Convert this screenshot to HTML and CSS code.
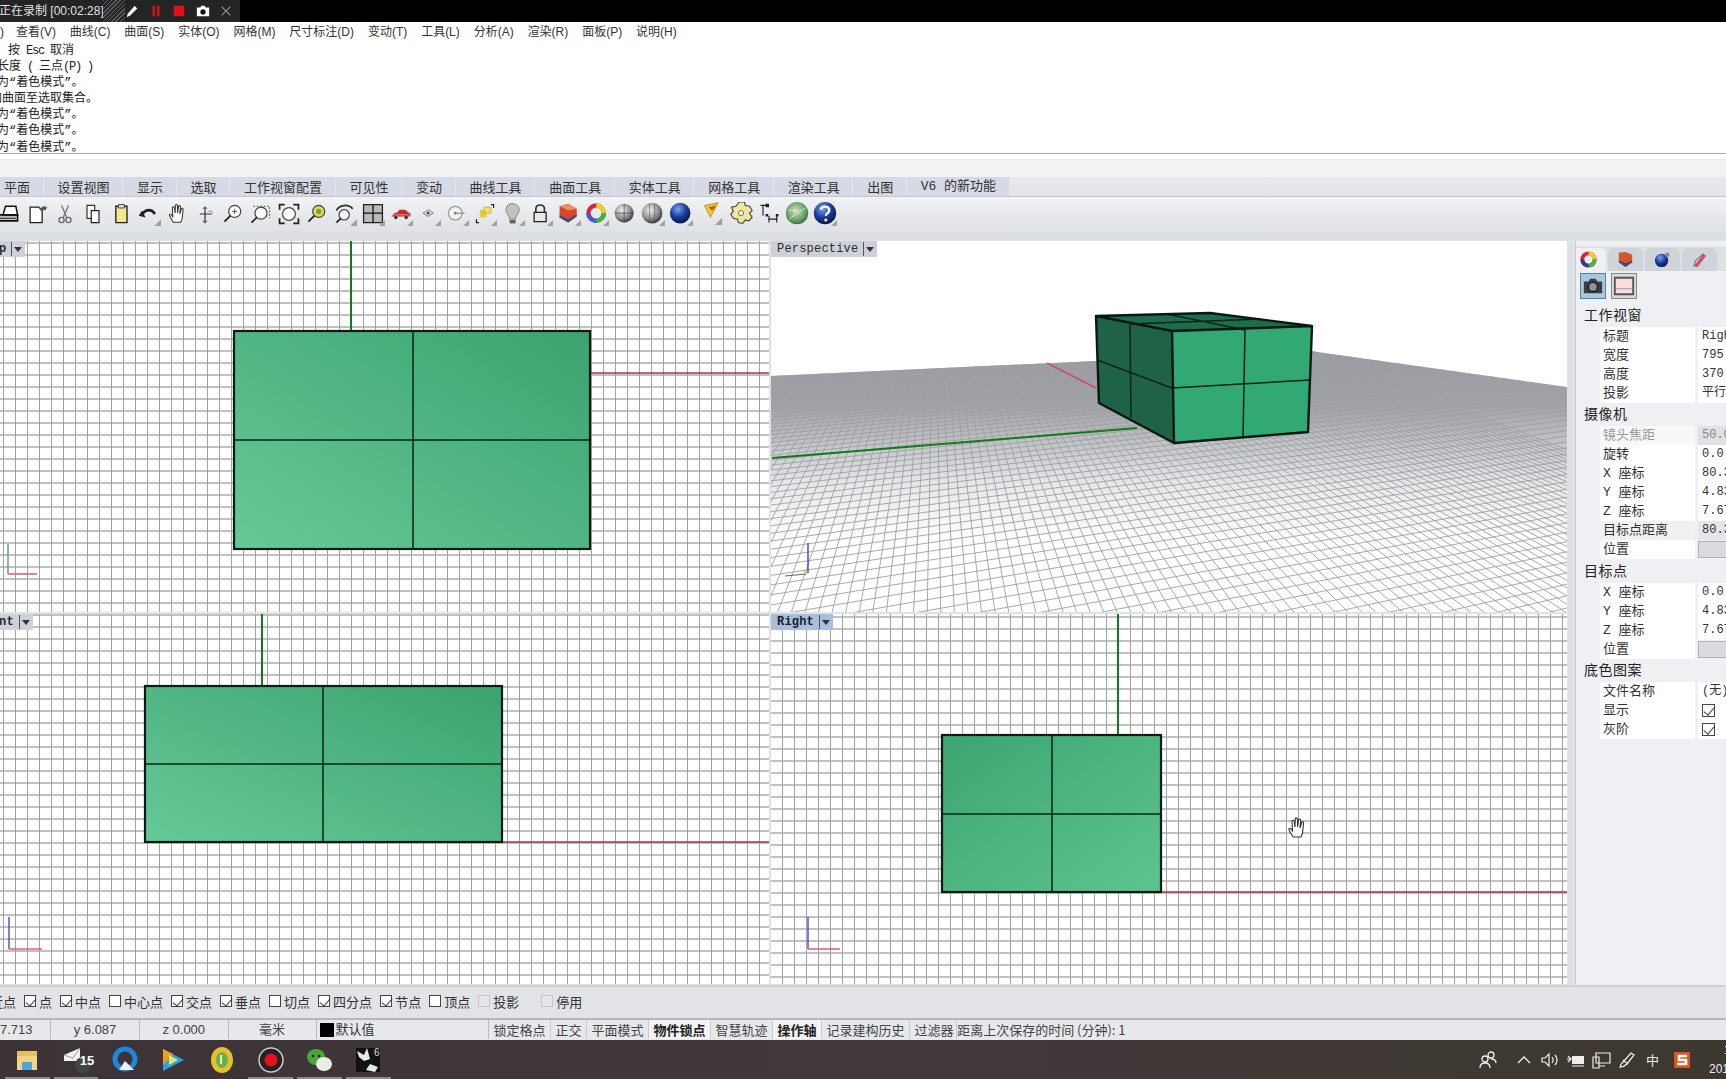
FILE: index.html
```html
<!DOCTYPE html>
<html lang="zh">
<head>
<meta charset="utf-8">
<title>Rhino 6</title>
<link rel="stylesheet" href="styles.css">
</head>
<body>
<svg class="defs" aria-hidden="true">
  <defs>
    <linearGradient id="faceA" x1="0" y1="1" x2="1" y2="0"><stop offset="0" stop-color="#66c998"/><stop offset="1" stop-color="#3ba270"/></linearGradient>
    <linearGradient id="faceB" x1="0" y1="0" x2="1" y2="1"><stop offset="0" stop-color="#3ca571"/><stop offset="1" stop-color="#5ec48f"/></linearGradient>
    <linearGradient id="floorFade" x1="0" y1="350" x2="0" y2="540" gradientUnits="userSpaceOnUse"><stop offset="0" stop-color="#999ba1"/><stop offset=".3" stop-color="#a2a4a9"/><stop offset=".7" stop-color="#e6e7e9"/><stop offset="1" stop-color="#ffffff"/></linearGradient>
    <radialGradient id="sphereGray" cx=".4" cy=".35" r=".7"><stop offset="0" stop-color="#f4f4f4"/><stop offset=".6" stop-color="#8f8f8f"/><stop offset="1" stop-color="#2c2c2c"/></radialGradient>
    <radialGradient id="sphereBlue" cx=".4" cy=".3" r=".7"><stop offset="0" stop-color="#7da4ea"/><stop offset=".55" stop-color="#1b3fa0"/><stop offset="1" stop-color="#0a1746"/></radialGradient>
    <radialGradient id="sphereGreen" cx=".45" cy=".4" r=".65"><stop offset="0" stop-color="#d0e4c0"/><stop offset=".7" stop-color="#5f9a62"/><stop offset="1" stop-color="#2e5a38"/></radialGradient>
    <symbol id="hand" viewBox="0 0 24 24"><path d="M8 21 4 14c-.8-1.4.9-2.4 1.9-1.2L7.500 15 7 5.500c0-1.600 2-1.600 2.200 0L10 11l.2-8c.1-1.500 2.100-1.500 2.200 0l.2 8 1-7c.2-1.500 2.200-1.300 2.100.2l-.7 7.800 1.700-5.500c.5-1.300 2.200-.8 1.900.6L17.500 17 16 21z" fill="#fff" stroke="#333" stroke-width="1.100"/></symbol>
    <symbol id="flyout" viewBox="0 0 8 8"><path d="M8 0V8H0z" fill="#9aa0a8"/></symbol>
  </defs>
</svg>

<header class="recbar">
  <div class="rec-pill">
    <span class="rec-time">正在录制 [00:02:28]</span>
    <span class="rec-hatch"></span>
    <svg class="rec-icon" viewBox="0 0 16 16"><path d="M2 15l1-4 8-9 3 3-8 8z" fill="#f4f4f4"/></svg>
    <svg class="rec-icon" viewBox="0 0 16 16"><path d="M4 2h3v12H4zM9 2h3v12H9z" fill="#c8141c"/></svg>
    <svg class="rec-icon" viewBox="0 0 16 16"><path d="M2 2h12v12H2z" fill="#e0101a"/></svg>
    <svg class="rec-icon" viewBox="0 0 16 16"><path d="M1 4h4l1-2h4l1 2h4v10H1z" fill="#fff"/><circle cx="8" cy="9" r="3" fill="#111"/></svg>
    <svg class="rec-icon" viewBox="0 0 16 16"><path d="M3 3l10 10M13 3 3 13" stroke="#9a9a9a" stroke-width="1.200"/></svg>
  </div>
</header>

<nav class="menubar">
  <span class="menu-cut">)</span><span>查看(V)</span><span>曲线(C)</span><span>曲面(S)</span><span>实体(O)</span><span>网格(M)</span><span>尺寸标注(D)</span><span>变动(T)</span><span>工具(L)</span><span>分析(A)</span><span>渲染(R)</span><span>面板(P)</span><span>说明(H)</span>
</nav>

<section class="history">
  <div class="hist-first">按<span class="asc"> Esc </span>取消</div>
  <div>长度<span class="asc"> ( </span>三点<span class="asc">(P) )</span></div>
  <div>为“着色模式”。</div>
  <div class="hist-long">加曲面至选取集合。</div>
  <div>为“着色模式”。</div>
  <div>为“着色模式”。</div>
  <div>为“着色模式”。</div>
</section>
<div class="cmdline"></div>

<div class="tabs">
  <span class="tab tab-first">平面</span><span class="tab">设置视图</span><span class="tab">显示</span><span class="tab">选取</span><span class="tab">工作视窗配置</span><span class="tab">可见性</span><span class="tab">变动</span><span class="tab">曲线工具</span><span class="tab">曲面工具</span><span class="tab">实体工具</span><span class="tab">网格工具</span><span class="tab">渲染工具</span><span class="tab">出图</span><span class="tab tab-mono">V6 的新功能</span>
</div>

<div class="toolbar">
  <svg class="tool" viewBox="0 0 28 28"><path d="M2 15h22v7H2z" fill="#b9bcc0" stroke="#111" stroke-width="1.800"/><path d="M7 15 10 5h12l2 10z" fill="#fff" stroke="#111" stroke-width="1.800"/><path d="M2 19h20" stroke="#111"/></svg>
  <svg class="tool" viewBox="0 0 28 28"><path d="M6 6h10l4 4v14H6z" fill="#fff" stroke="#222" stroke-width="1.500"/><path d="M17 8l6-4v2l3-1-2 5-2-1-3 2z" fill="#555"/></svg>
  <svg class="tool" viewBox="0 0 28 28"><path d="M10 4l6 14M18 4l-6 14" stroke="#777" stroke-width="1.600"/><circle cx="10" cy="21" r="3" fill="none" stroke="#666" stroke-width="1.500"/><circle cx="18" cy="21" r="3" fill="none" stroke="#666" stroke-width="1.500"/></svg>
  <svg class="tool" viewBox="0 0 28 28"><path d="M7 4h9l0 15H7z" fill="#fff" stroke="#333" stroke-width="1.400"/><path d="M12 10h9v14h-9z" fill="#fff" stroke="#222" stroke-width="1.400"/></svg>
  <svg class="tool" viewBox="0 0 28 28"><path d="M8 5h13v19H8z" fill="#f3e98c" stroke="#222" stroke-width="1.600"/><path d="M11 3h7v4h-7z" fill="#ddd" stroke="#333"/></svg>
  <svg class="tool" viewBox="0 0 28 28"><path d="M6 14c5-6 11-6 15 0" fill="none" stroke="#222" stroke-width="3"/><path d="M2 16l8 2-4-8z" fill="#222"/><use href="#flyout" x="20" y="20" width="8" height="8"/></svg>
  <svg class="tool" viewBox="0 0 28 28"><use href="#hand" x="1" y="1" width="26" height="26"/></svg>
  <svg class="tool" viewBox="0 0 28 28"><path d="M14 8v14M8 14h14" stroke="#333" stroke-width="1.400"/><path d="M11 8h6l-3-3zM11 22h6l-3 3z" fill="#555"/><path d="M18 11c3-1 5 0 5 2" fill="none" stroke="#777"/></svg>
  <svg class="tool" viewBox="0 0 28 28"><circle cx="16" cy="11" r="7" fill="#fff" stroke="#444" stroke-width="1.400"/><path d="M11 16 4 23" stroke="#222" stroke-width="2"/><path d="M13 11h6M16 8v6" stroke="#444"/></svg>
  <svg class="tool" viewBox="0 0 28 28"><circle cx="14" cy="13" r="7" fill="#fff" stroke="#444" stroke-width="1.400"/><path d="M9 18 3 24" stroke="#222" stroke-width="2"/><path d="M5 5h19v14" fill="none" stroke="#333" stroke-dasharray="2 2"/></svg>
  <svg class="tool" viewBox="0 0 28 28"><circle cx="14" cy="14" r="7.500" fill="#fff" stroke="#444" stroke-width="1.400"/><path d="M3 9V3h6M25 9V3h-6M3 19v6h6M25 19v6h-6" fill="none" stroke="#222" stroke-width="2"/></svg>
  <svg class="tool" viewBox="0 0 28 28"><circle cx="16" cy="11" r="7" fill="#d8dd62" stroke="#444" stroke-width="1.400"/><path d="M11 16 4 23" stroke="#222" stroke-width="2"/><circle cx="16" cy="11" r="3" fill="#8e9b2a"/></svg>
  <svg class="tool" viewBox="0 0 28 28"><circle cx="13" cy="15" r="6" fill="#fff" stroke="#444" stroke-width="1.400"/><path d="M9 19l-5 5" stroke="#222" stroke-width="2"/><path d="M4 10c3-7 14-8 19-2" fill="none" stroke="#333" stroke-width="2"/><use href="#flyout" x="20" y="20" width="8" height="8"/></svg>
  <svg class="tool" viewBox="0 0 28 28"><path d="M3 3h22v21H3z" fill="#b7b9bb" stroke="#222" stroke-width="1.500"/><path d="M14 3v21M3 13h22" stroke="#111" stroke-width="1.500"/><use href="#flyout" x="21" y="21" width="7" height="7"/></svg>
  <svg class="tool" viewBox="0 0 28 28"><path d="M3 17l3-4 4-1 2-3h7l3 3 3 1v4z" fill="#c62a2a"/><path d="M5 15h19" stroke="#fbe" stroke-width=".8"/><circle cx="8" cy="18" r="2" fill="#333"/><circle cx="20" cy="18" r="2" fill="#333"/><use href="#flyout" x="21" y="21" width="7" height="7"/></svg>
  <svg class="tool" viewBox="0 0 28 28"><path d="M7 13l7-4 5 4-6 4z" fill="#d8d8d8" stroke="#777"/><circle cx="13" cy="13" r="1.500" fill="#444"/><use href="#flyout" x="21" y="21" width="7" height="7"/></svg>
  <svg class="tool" viewBox="0 0 28 28"><circle cx="12" cy="13" r="8" fill="#f2f2f2" stroke="#999" stroke-width="1.400"/><path d="M12 13h11" stroke="#666"/><circle cx="12" cy="13" r="1.500" fill="#777"/><use href="#flyout" x="21" y="21" width="7" height="7"/></svg>
  <svg class="tool" viewBox="0 0 28 28"><path d="M8 9h8v9H8z" fill="#e6cc2d"/><path d="M13 6h8v7h-8z" fill="#f1de66" stroke="#c7ad22"/><path d="M4 20v4h3M24 7V3h-3" fill="none" stroke="#222" stroke-width="1.400"/><use href="#flyout" x="21" y="21" width="7" height="7"/></svg>
  <svg class="tool" viewBox="0 0 28 28"><path d="M13 2c6 0 9 4 8 9-1 3-4 5-4 9H10c0-4-3-6-4-9-1-5 2-9 7-9z" fill="#bfc4c2" stroke="#777"/><path d="M10 21h7v4h-7z" fill="#666"/><use href="#flyout" x="21" y="21" width="7" height="7"/></svg>
  <svg class="tool" viewBox="0 0 28 28"><path d="M8 12V8c0-6 10-6 10 0v4" fill="none" stroke="#333" stroke-width="2"/><path d="M6 12h14v11H6z" fill="#e8e8e8" stroke="#222" stroke-width="1.500"/><use href="#flyout" x="21" y="21" width="7" height="7"/></svg>
  <svg class="tool" viewBox="0 0 28 28"><path d="M3 5l10-3 10 6v9l-10 7-10-6z" fill="#d9472a"/><path d="M3 15l10 5 10-6v3l-10 7-10-6z" fill="#3a4f7a"/><path d="M3 5l10 5 10-2-10-6z" fill="#ee8f63"/><use href="#flyout" x="21" y="21" width="7" height="7"/></svg>
  <svg class="tool" viewBox="0 0 28 28"><circle cx="13" cy="13" r="9" fill="none" stroke="#d23" stroke-width="5"/><path d="M13 4a9 9 0 0 1 9 9" fill="none" stroke="#e6d21f" stroke-width="5"/><path d="M22 13a9 9 0 0 1-9 9" fill="none" stroke="#3bb54a" stroke-width="5"/><path d="M13 22a9 9 0 0 1-9-9" fill="none" stroke="#3a5fd0" stroke-width="5"/><use href="#flyout" x="21" y="21" width="7" height="7"/></svg>
  <svg class="tool" viewBox="0 0 28 28"><circle cx="13" cy="13" r="11" fill="url(#sphereGray)"/><path d="M13 2v22M2 13h22" stroke="#333" stroke-width=".7"/></svg>
  <svg class="tool" viewBox="0 0 28 28"><circle cx="13" cy="13" r="12" fill="url(#sphereGray)"/><path d="M10 2v22M16 2v22" stroke="#555" stroke-width=".7"/><use href="#flyout" x="21" y="21" width="7" height="7"/></svg>
  <svg class="tool" viewBox="0 0 28 28"><circle cx="13" cy="13" r="12" fill="url(#sphereBlue)"/><use href="#flyout" x="21" y="21" width="7" height="7"/></svg>
  <svg class="tool tool-gap" viewBox="0 0 28 28"><path d="M4 4l16-3-6 11-3 6z" fill="#e8c93a" stroke="#b58a20"/><path d="M9 6l9-2-5 6z" fill="#d24a2a"/><use href="#flyout" x="16" y="18" width="9" height="9"/></svg>
  <svg class="tool" viewBox="0 0 28 28"><path d="M12 0h6l1 4 5 1 3 5-3 3 3 5-4 4-4-1-3 4-5-1-1-4-5-1-3-5 3-3-2-5 5-1z" fill="#f0e79a" stroke="#444" stroke-width="1.300"/><circle cx="14" cy="13" r="3" fill="#fff" stroke="#555"/></svg>
  <svg class="tool" viewBox="0 0 28 28"><path d="M4 4h7M7 4v12M13 20h11M14 16v8M23 16v8" fill="none" stroke="#222" stroke-width="1.300"/><path d="M10 2h4v4h-4zM10 14h3v3h-3zM22 14h3v3h-3z" fill="#222"/></svg>
  <svg class="tool" viewBox="0 0 28 28"><circle cx="14" cy="13" r="13" fill="url(#sphereGreen)"/><path d="M14 13 24 7M14 13l-9 7M4 9l10 2" stroke="#e5f0da" stroke-width="1"/></svg>
  <svg class="tool" viewBox="0 0 28 28"><circle cx="14" cy="13" r="13" fill="url(#sphereBlue)"/><path d="M9 9c1-5 10-5 10 1 0 3-4 3-4 6" fill="none" stroke="#fff" stroke-width="2.800"/><circle cx="15" cy="21" r="1.800" fill="#fff"/><use href="#flyout" x="21" y="21" width="7" height="7"/></svg>
</div>

<main class="workspace">
  <div class="viewports">
    <div class="vp vp-top">
      <svg class="scene" viewBox="0 241 769 371" preserveAspectRatio="none">
        <path class="axis-g" d="M351 241V331"/>
        <path class="axis-r" d="M590 373H769"/>
        <rect class="face" fill="url(#faceA)" x="234" y="331" width="356" height="218"/>
        <path class="seam" d="M413 331V549M234 440H590"/>
        <path class="mini-g" d="M8 544V574"/><path class="mini-r" d="M8 574H37"/>
      </svg>
      <div class="vp-label vp-label-cut"><span>p</span><i class="caret"></i></div>
    </div>

    <div class="vp vp-persp">
      <svg class="scene" id="perspScene" viewBox="771 241 796 371" preserveAspectRatio="none">
        <clipPath id="floorClip"><path d="M771 376 1310 351 1567 387V612H771z"/></clipPath>
        <path d="M771 376 1310 351 1567 387V612H771z" fill="url(#floorFade)"/>
        <path id="floorLines" class="floor-lines" clip-path="url(#floorClip)" d=""/>
        <path class="axis-r axis-soft" d="M1047 363 1096 388"/>
        <path class="axis-g" d="M772 458 1137 428"/>
        <path d="M1096 316 1210 313 1312 326 1172 331z" fill="#1c6d4b"/>
        <path d="M1096 316 1172 331 1174 443 1099 403z" fill="#1f6347"/>
        <path d="M1172 331 1312 326 1308 432 1174 443z" fill="#32a974"/>
        <path class="seam" d="M1130 325 1131 418M1097 360 1172 388M1245 330 1243 437M1172 388 1310 380M1167 314 1245 330M1130 324 1261 319"/>
        <path class="edge" d="M1096 316 1210 313 1312 326 1308 432 1174 443 1099 403zM1096 316 1172 331 1312 326M1172 331 1174 443"/>
        <path d="M808 543V573" stroke="#4a3fc4" stroke-width="1.400"/><path d="M785 576 806 574" stroke="#666" stroke-width="1.200"/><path d="M804 570l3 4" stroke="#d6c04a" stroke-width="2"/>
      </svg>
      <div class="vp-label"><span>Perspective</span><i class="caret"></i></div>
    </div>

    <div class="vp vp-front">
      <svg class="scene" viewBox="0 614 769 370" preserveAspectRatio="none">
        <path class="axis-g" d="M262 614V686"/>
        <path class="axis-r" d="M502 842H769"/>
        <rect class="face" fill="url(#faceA)" x="145" y="686" width="357" height="156"/>
        <path class="seam" d="M323 686V842M145 764H502"/>
        <path class="mini-b" d="M9 917V949"/><path class="mini-r" d="M9 949H42"/>
      </svg>
      <div class="vp-label vp-label-cut"><span>nt</span><i class="caret"></i></div>
    </div>

    <div class="vp vp-right">
      <svg class="scene" viewBox="771 614 796 370" preserveAspectRatio="none">
        <path class="axis-g" d="M1118 614V735"/>
        <path class="axis-r" d="M1161 892H1567"/>
        <rect class="face" fill="url(#faceB)" x="942" y="735" width="219" height="157"/>
        <path class="seam" d="M1052 735V892M942 814H1161"/>
        <path class="mini-b" d="M808 917V949"/><path class="mini-r" d="M808 949H840"/>
        <use href="#hand" x="1285" y="815" width="24" height="26"/>
      </svg>
      <div class="vp-label vp-label-active"><span>Right</span><i class="caret"></i></div>
    </div>
  </div>

  <aside class="panel">
    <div class="panel-tabs">
      <span class="ptab ptab-on"><svg viewBox="0 0 20 20"><circle cx="10" cy="10" r="6.500" fill="none" stroke="#d23" stroke-width="4"/><path d="M10 3.500A6.500 6.500 0 0 1 16.500 10" fill="none" stroke="#e6d21f" stroke-width="4"/><path d="M16.500 10A6.500 6.500 0 0 1 10 16.500" fill="none" stroke="#3bb54a" stroke-width="4"/><path d="M10 16.500A6.500 6.500 0 0 1 3.500 10" fill="none" stroke="#2a3f90" stroke-width="4"/></svg></span>
      <span class="ptab"><svg viewBox="0 0 20 20"><path d="M3 3l7-1 7 3v8l-7 5-7-5z" fill="#d9532a"/><path d="M3 11l7 3 7-3v2l-7 5-7-5z" fill="#3a4f7a"/></svg></span>
      <span class="ptab"><svg viewBox="0 0 20 20"><circle cx="9" cy="11" r="7" fill="url(#sphereBlue)"/><path d="M13 3h4v4h-4z" fill="#888"/></svg></span>
      <span class="ptab"><svg viewBox="0 0 20 20"><path d="M4 17 14 4l3 2-9 12z" fill="#c9536a"/><path d="M4 17l2-6 8-7" fill="none" stroke="#555"/></svg></span>
    </div>
    <div class="panel-tools">
      <span class="ptool ptool-on"><svg viewBox="0 0 24 24"><path d="M2 7h5l2-3h6l2 3h5v13H2z" fill="#3a3f44"/><circle cx="12" cy="13" r="5" fill="#8c949b" stroke="#15181b" stroke-width="1.500"/></svg></span>
      <span class="ptool"><svg viewBox="0 0 24 24"><path d="M2 3h20v18H2z" fill="#fbdde2" stroke="#555" stroke-width="2"/><path d="M3 15h18" stroke="#999"/></svg></span>
    </div>
    <h2 class="sec">工作视窗</h2>
    <div class="row"><span class="k">标题</span><span class="v">Right</span></div>
    <div class="row"><span class="k">宽度</span><span class="v">795</span></div>
    <div class="row"><span class="k">高度</span><span class="v">370</span></div>
    <div class="row"><span class="k">投影</span><span class="v">平行</span></div>
    <h2 class="sec">摄像机</h2>
    <div class="row row-off"><span class="k">镜头焦距</span><span class="v">50.0</span></div>
    <div class="row"><span class="k">旋转</span><span class="v">0.0</span></div>
    <div class="row"><span class="k">X 座标</span><span class="v">80.356</span></div>
    <div class="row"><span class="k">Y 座标</span><span class="v">4.837</span></div>
    <div class="row"><span class="k">Z 座标</span><span class="v">7.674</span></div>
    <div class="row row-grey"><span class="k">目标点距离</span><span class="v">80.356</span></div>
    <div class="row"><span class="k">位置</span><span class="v v-btn"></span></div>
    <h2 class="sec">目标点</h2>
    <div class="row"><span class="k">X 座标</span><span class="v">0.0</span></div>
    <div class="row"><span class="k">Y 座标</span><span class="v">4.837</span></div>
    <div class="row"><span class="k">Z 座标</span><span class="v">7.674</span></div>
    <div class="row"><span class="k">位置</span><span class="v v-btn"></span></div>
    <h2 class="sec">底色图案</h2>
    <div class="row"><span class="k">文件名称</span><span class="v">(无)</span></div>
    <div class="row"><span class="k">显示</span><span class="v"><i class="cb cb-on"></i></span></div>
    <div class="row"><span class="k">灰阶</span><span class="v"><i class="cb cb-on"></i></span></div>
  </aside>
</main>

<div class="osnap">
  <span class="snap snap-cut">近点</span>
  <span class="snap"><i class="cb cb-on"></i>点</span>
  <span class="snap"><i class="cb cb-on"></i>中点</span>
  <span class="snap"><i class="cb"></i>中心点</span>
  <span class="snap"><i class="cb cb-on"></i>交点</span>
  <span class="snap"><i class="cb cb-on"></i>垂点</span>
  <span class="snap"><i class="cb"></i>切点</span>
  <span class="snap"><i class="cb cb-on"></i>四分点</span>
  <span class="snap"><i class="cb cb-on"></i>节点</span>
  <span class="snap"><i class="cb"></i>顶点</span>
  <span class="snap"><i class="cb cb-dim"></i>投影</span>
  <span class="snap snap-far"><i class="cb cb-dim"></i>停用</span>
</div>

<footer class="status">
  <span class="cell cell-x">7.713</span>
  <span class="cell cell-y">y 6.087</span>
  <span class="cell cell-z">z 0.000</span>
  <span class="cell cell-u">毫米</span>
  <span class="cell cell-layer"><i class="swatch"></i>默认值</span>
  <span class="pane">锁定格点</span><span class="pane">正交</span><span class="pane">平面模式</span><span class="pane pane-on">物件锁点</span><span class="pane">智慧轨迹</span><span class="pane pane-on">操作轴</span><span class="pane">记录建构历史</span><span class="pane pane-last">过滤器</span>
  <span class="saved">距离上次保存的时间 (分钟): 1</span>
</footer>

<div class="taskbar">
  <span class="app app-on"><svg viewBox="0 0 30 30"><path d="M5 6h20v19H5z" fill="#f0d486"/><path d="M5 6h20v5H5z" fill="#e6bf60"/><path d="M10 17h10v8H10z" fill="#4fa6d8"/></svg></span>
  <span class="app app-on"><svg viewBox="0 0 30 30"><path d="M3 10 19 3v13L3 16z" fill="#f2f2f2"/><path d="M3 10l9 3 7-10" fill="none" stroke="#999"/><circle cx="22" cy="20" r="8" fill="#444"/></svg><b class="badge">15</b></span>
  <span class="app"><svg viewBox="0 0 30 30"><circle cx="15" cy="14" r="10" fill="none" stroke="#1f86dd" stroke-width="5"/><path d="M9 25l6-9 9 9z" fill="#eef2f5"/></svg></span>
  <span class="app"><svg viewBox="0 0 30 30"><path d="M5 4 26 15 5 26z" fill="#2f9fe0"/><path d="M5 4 15 9 5 20z" fill="#e8a020"/><path d="M11 10l9 5-9 5z" fill="#dfe86a"/></svg></span>
  <span class="app"><svg viewBox="0 0 30 30"><ellipse cx="15" cy="15" rx="11" ry="13" fill="#e6c02c"/><ellipse cx="15" cy="15" rx="6" ry="8" fill="#6cae50"/><path d="M14 10v9" stroke="#e6f0c0" stroke-width="2"/></svg></span>
  <span class="app app-on"><svg viewBox="0 0 30 30"><circle cx="15" cy="15" r="12" fill="#222" stroke="#ccc" stroke-width="1.500"/><circle cx="15" cy="15" r="6.500" fill="#e8101a"/></svg></span>
  <span class="app app-on"><svg viewBox="0 0 30 30"><ellipse cx="12" cy="12" rx="9" ry="8" fill="#4aa53a"/><ellipse cx="20" cy="19" rx="8" ry="7" fill="#e8eee4"/><circle cx="9" cy="11" r="1.300" fill="#123"/><circle cx="15" cy="11" r="1.300" fill="#123"/></svg></span>
  <span class="app app-on"><svg viewBox="0 0 30 30"><path d="M3 3h24v24H3z" fill="#111"/><path d="M4 6l7 4 3-7 3 11-6 2-5-4zM13 25l4-6 8 3-3 5z" fill="#e8e8e8"/><text class="rhino-six" x="21" y="11">6</text></svg></span>
  <div class="tray">
    <svg class="ti" viewBox="0 0 20 20"><circle cx="13" cy="5" r="3" fill="none" stroke="#eee" stroke-width="1.300"/><circle cx="7" cy="9" r="3" fill="none" stroke="#eee" stroke-width="1.300"/><path d="M2 18c0-4 2-5 5-5s5 1 5 5M13 9c3 0 5 1 5 4" fill="none" stroke="#eee" stroke-width="1.300"/></svg>
    <svg class="ti ti-far" viewBox="0 0 20 20"><path d="M4 13l6-6 6 6" fill="none" stroke="#eee" stroke-width="1.300"/></svg>
    <svg class="ti" viewBox="0 0 20 20"><path d="M2 8h3l4-4v12l-4-4H2z" fill="none" stroke="#eee" stroke-width="1.200"/><path d="M12 7c1.500 2 1.500 4 0 6M15 5c2.500 3 2.500 7 0 10" fill="none" stroke="#eee" stroke-width="1.200"/></svg>
    <svg class="ti" viewBox="0 0 20 20"><path d="M6 6h12v8H6z" fill="#eee"/><path d="M1 9h5M2 6l3 3-3 3M6 16h12" fill="none" stroke="#eee" stroke-width="1.200"/></svg>
    <svg class="ti" viewBox="0 0 20 20"><path d="M5 3h14v10H5zM2 7h6v11H2zM8 16h6" fill="none" stroke="#eee" stroke-width="1.200"/></svg>
    <svg class="ti" viewBox="0 0 20 20"><path d="M3 17c0-3 2-4 4-6l7-8 3 2-7 9c-2 2-4 3-7 3zM6 10l5 4" fill="none" stroke="#eee" stroke-width="1.300"/></svg>
    <span class="ti ti-text">中</span>
    <svg class="ti ti-s" viewBox="0 0 20 20"><path d="M2 2h16v16H2z" fill="#d8561f"/><path d="M15 6H7v4h7v4H5" fill="none" stroke="#fff" stroke-width="2.600"/></svg>
    <div class="clock"><div>14:32</div><div>2019/12/16</div></div>
  </div>
</div>
<script src="app.js"></script>
</body>
</html>
```
FILE: styles.css
```css
* { box-sizing: border-box; }
html, body { margin: 0; padding: 0; }
body {
  width: 1726px; height: 1079px; overflow: hidden;
  display: flex; flex-direction: column;
  background: #e2e5ea; color: #2c2c2c;
  font: 13px/1 "Liberation Sans", "Noto Sans CJK SC", sans-serif;
}
i { font-style: normal; }
.defs { position: absolute; width: 0; height: 0; }

/* recorder strip */
.recbar { height: 22px; flex: none; background: #000; }
.rec-pill { width: 240px; height: 22px; display: flex; align-items: center; background: #242424; color: #e2e2e2; overflow: hidden; }
.rec-time { width: 104px; flex: none; font-size: 12px; white-space: nowrap; margin-left: -1px; }
.rec-hatch { width: 22px; height: 22px; flex: none; background: repeating-linear-gradient(135deg, #5c5c5c 0 1px, #262626 1px 3px); }
.rec-icon { width: 14px; height: 14px; flex: none; margin-left: 9.500px; }
.rec-icon:first-of-type { margin-left: 0; }

/* menu */
.menubar { height: 20px; flex: none; background: #fff; display: flex; align-items: center; gap: 13.900px; font-size: 12px; color: #333; white-space: nowrap; }
.menu-cut { width: 2px; overflow: visible; }

/* command history */
.history { height: 112px; flex: none; background: #fff; padding-top: 1px; font: 12px/16.100px "Liberation Mono", "Noto Sans CJK SC", monospace; color: #222; overflow: hidden; border-bottom: 1px solid #a8a8a8; white-space: nowrap; }
.history div { margin-left: -3px; }
.history .hist-first { margin-left: 8px; }
.history .hist-long { margin-left: -10px; }
.asc { letter-spacing: -1.200px; }
.cmdline { height: 23px; flex: none; background: linear-gradient(#ffffff 0 5px, #e9ebee 5px 6px, #f1f2f4 6px); }

/* ribbon tabs */
.tabs { height: 20px; flex: none; display: flex; align-items: center; background: linear-gradient(#e8eaed, #e2e4e8); border-bottom: 1px solid #c4c7cc; white-space: nowrap; }
.tab { height: 19px; display: flex; align-items: center; padding: 0 13.750px; background: #d6dae4; box-shadow: inset -1px 0 0 #e6e7ea; color: #333; font-family: "Noto Sans CJK SC", sans-serif; }
.tab-first { padding-left: 4px; }
.tab-mono { font-family: "Liberation Mono", "Noto Sans CJK SC", monospace; }

/* toolbar */
.toolbar { height: 43px; flex: none; display: flex; align-items: flex-start; padding: 3px 0 0; background: linear-gradient(#f2f3f5, #d9dce1); overflow: hidden; }
.tool { width: 28px; height: 28px; flex: none; padding: 2px; }
.tool:first-child { margin-left: -5px; }
.tool-gap { margin-left: 4px; }

/* workspace */
.workspace { height: 745px; flex: none; display: flex; gap: 8px; padding-top: 1px; background: #dfe2e6; }
.viewports { display: grid; grid-template-columns: 769px 796px; grid-template-rows: 371px 370px; gap: 2px; flex: none; }
.vp {
  position: relative; overflow: hidden; background-color: #fff;
  background-image: linear-gradient(to right, #a3a3a3 1px, transparent 1px), linear-gradient(to bottom, #c0c0c0 2px, transparent 2px);
  background-size: 12px 12px;
}
.vp-top { background-position: 3px 0, 0 1px; }
.vp-front { background-position: 3px 0, 0 0; }
.vp-right { background-position: 11px 0, 0 2px; }
.vp-persp { background-image: none; }
.scene { position: absolute; inset: 0; width: 100%; height: 100%; }
.axis-g { stroke: #137a1c; stroke-width: 2; fill: none; }
.axis-r { stroke: #a8324a; stroke-width: 1.600; fill: none; }
.axis-soft { stroke: #c94f66; }
.face { stroke: #0b1c13; stroke-width: 2.200; }
.seam { stroke: #0c2418; stroke-width: 1.500; fill: none; }
.edge { stroke: #08190f; stroke-width: 2.400; fill: none; stroke-linejoin: round; }
.floor-lines { stroke: #9d9fa3; stroke-width: .9; fill: none; }
.mini-g { stroke: #5a9c78; stroke-width: 1.400; }
.mini-r { stroke: #e0607a; stroke-width: 1.600; }
.mini-b { stroke: #4a4ac8; stroke-width: 1.400; }

.vp-label {
  position: absolute; left: 0; top: 0; height: 16px; padding: 0 3px 0 6px;
  display: flex; align-items: center; gap: 5px; background: #ced2d8;
  font: 12px/16px "Liberation Mono", monospace; color: #2b2b2b; letter-spacing: .2px;
}
.vp-label-cut { padding-left: 0; font-weight: 700; }
.vp-label-cut span { margin-left: -1px; }
.vp-label-active { background: #a9bfd9; font-weight: 700; color: #14202c; }
.caret { width: 11px; height: 14px; border-left: 1px solid #555; position: relative; }
.caret::after { content: ""; position: absolute; left: 2px; top: 5px; border: 4px solid transparent; border-top: 5px solid #333; border-bottom: 0; }

/* properties panel */
.panel { width: 151px; flex: none; height: 744px; background: #eef0f3; overflow: hidden; padding-top: 5px; border-left: 1px solid #c9ccd1; }
.panel-tabs { height: 25px; display: flex; gap: 2px; padding-left: 0; margin-left: -5px; background: #dde0e5; align-items: flex-end; }
.ptab { width: 35px; height: 23px; flex: none; display: flex; align-items: center; justify-content: center; background: #cfd3da; border-radius: 6px 6px 0 0; }
.ptab-on { background: #f0f1f4; }
.ptab svg { width: 19px; height: 19px; }
.panel-tools { height: 32px; display: flex; gap: 5px; padding: 2px 0 0 4px; }
.ptool { width: 26px; height: 26px; padding: 1px; display: block; background: #dadada; border: 1px solid #888; }
.ptool svg { display: block; width: 22px; height: 22px; }
.ptool-on { background: #a9c8de; border-color: #4d86ad; }
.sec { margin: 0; padding: 0 0 2px 8px; height: 23.500px; display: flex; align-items: center; font: 400 14px/1 "Noto Sans CJK SC", sans-serif; color: #222; letter-spacing: .5px; }
.row { height: 19px; margin-left: 24px; display: grid; grid-template-columns: 95px 60px; gap: 3px; font: 13px/19px "Liberation Mono", "Noto Sans CJK SC", monospace; color: #333; }
.k { background: #fff; padding-left: 3px; white-space: nowrap; }
.v { background: #fff; padding-left: 4px; font-size: 12px; white-space: nowrap; overflow: hidden; display: flex; align-items: center; }
.row-off .k { background: #f8f8f9; color: #9a9a9a; }
.row-off .v { background: #dfe1e4; color: #8a8a8a; }
.row-grey .k { background: #f0f1f3; }
.row-grey .v { background: #e4e6e9; }
.v-btn { background: #d9dbde; border: 1px solid #b0b2b6; margin: 1px 0; }
.cb { display: inline-block; width: 13px; height: 13px; border: 1px solid #444; background: #fff; position: relative; flex: none; }
.cb-on::after { content: ""; position: absolute; left: 3px; top: 0; width: 5px; height: 9px; border: solid #3a3a3a; border-width: 0 1.300px 1.300px 0; transform: rotate(40deg); }
.cb-dim { border-color: #c4c6c9; background: #e4e6e9; }

/* osnap */
.osnap { height: 35px; flex: none; display: flex; align-items: center; gap: 8px; padding-bottom: 1px; background: linear-gradient(#cfd1d5 0 2px, #e1e3e7 2px); border-bottom: 2px solid #b5b7bb; white-space: nowrap; font-family: "Noto Sans CJK SC", sans-serif; color: #333; }
.snap { display: flex; align-items: center; gap: 3px; }
.snap .cb { width: 12px; height: 12px; }
.snap-cut { margin-left: -10px; }
.snap-far { margin-left: 14px; }

/* status */
.status { height: 20px; flex: none; display: flex; align-items: center; padding-bottom: 1px; background: #e6e8ec; white-space: nowrap; color: #444; font-family: "Noto Sans CJK SC", sans-serif; }
.cell { height: 19px; display: flex; align-items: center; justify-content: center; border-right: 1px solid #b9bbc0; font-family: "Liberation Sans", "Noto Sans CJK SC", sans-serif; }
.cell-x { width: 51px; justify-content: flex-start; }
.cell-y { width: 89px; }
.cell-z { width: 88.500px; }
.cell-u { width: 88px; }
.cell-layer { width: 172px; justify-content: flex-start; padding-left: 3px; gap: 2px; color: #333; }
.swatch { width: 14px; height: 14px; background: #000; }
.pane { height: 19px; display: flex; align-items: center; padding: 0 5px; color: #444; box-shadow: inset -1px 0 0 #c9cbd0; }
.pane-on { font-weight: 700; color: #222; background: #f2f3f5; }
.pane-last { padding-right: 3.500px; }
.saved { color: #444; }

/* taskbar */
.taskbar { height: 39px; flex: none; display: flex; align-items: center; padding-left: 3px; background: linear-gradient(90deg, #3b3337, #41383b 50%, #3d382f); overflow: hidden; }
.app { width: 48.700px; height: 39px; flex: none; display: flex; align-items: center; justify-content: center; position: relative; }
.app svg { width: 30px; height: 30px; }
.app-on::after { content: ""; position: absolute; left: 2px; right: 2px; bottom: 0; height: 2px; background: #8d8a8a; }
.badge { position: absolute; left: 28px; top: 14px; color: #fff; font: 700 13px/1 "Liberation Sans", sans-serif; }
.rhino-six { font: 10px "Liberation Sans", sans-serif; fill: #ddd; }
.tray { display: flex; align-items: center; gap: 5.700px; margin-left: 1085px; flex: none; }
.ti { width: 20px; height: 20px; flex: none; }
.ti-far { margin-left: 11px; }
.ti-text { color: #f0f0f0; font: 13px/20px "Noto Sans CJK SC", sans-serif; text-align: center; }
.ti-s { margin-left: 4px; }
.clock { width: 72px; flex: none; margin-left: 5px; color: #eee; font-size: 12px; line-height: 19px; text-align: center; white-space: nowrap; }
```
FILE: app.js
```js
// Perspective construction plane: two pencils of lines through the vanishing points.
(function () {
  var path = document.getElementById('floorLines');
  var vp1 = [3300, 190];
  var vp2 = [935, 205];
  var d = '';
  var y = 376;
  var xb;

  while (y < 800) {
    d += 'M771 ' + y.toFixed(1) + 'L' + vp1[0] + ' ' + vp1[1];
    y += 1.5 + 0.04 * (y - 376);
  }
  for (xb = 192; xb <= 2950; xb += 26) {
    d += 'M' + vp2[0] + ' ' + vp2[1] + 'L' + xb + ' 984';
  }
  path.setAttribute('d', d);
})();
```
